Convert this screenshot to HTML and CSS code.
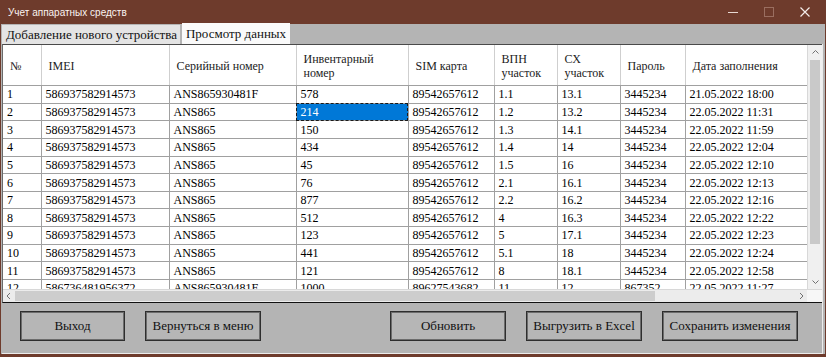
FILE: index.html
```html
<!DOCTYPE html>
<html>
  <head>
    <title>Учет аппаратных средств</title>
    <link rel="stylesheet" href="styles.css">
  </head>
  <body>
    <div class="window">
      <div class="titlebar">
        <span class="title">Учет аппаратных средств</span>
        <div class="controls">
          <svg class="ctl" width="12" height="12" viewBox="0 0 12 12"><path d="M1 6.5h10" stroke="#e8d8d2" stroke-width="1"/></svg>
          <svg class="ctl dim" width="12" height="12" viewBox="0 0 12 12"><rect x="1.5" y="1.5" width="9" height="9" fill="none" stroke="#9a6e60" stroke-width="1"/></svg>
          <svg class="ctl" width="12" height="12" viewBox="0 0 12 12"><path d="M1.5 1.5l9 9M10.5 1.5l-9 9" stroke="#f4ece9" stroke-width="1.2"/></svg>
        </div>
      </div>

      <div class="client">
        <div class="tabs">
          <div class="tab">Добавление нового устройства</div>
          <div class="tab active">Просмотр данных</div>
        </div>

        <div class="page">
          <div class="grid">
            <div class="grid-body">
              <div class="viewport">
                <table class="data">
                  <colgroup>
                    <col style="width:38px">
                    <col style="width:128px">
                    <col style="width:127px">
                    <col style="width:112px">
                    <col style="width:86px">
                    <col style="width:63px">
                    <col style="width:63px">
                    <col style="width:65px">
                    <col style="width:122px">
                  </colgroup>
                  <thead>
                    <tr>
                      <th>№</th>
                      <th>IMEI</th>
                      <th>Серийный номер</th>
                      <th>Инвентарный<br>номер</th>
                      <th>SIM карта</th>
                      <th>ВПН<br>участок</th>
                      <th>СХ<br>участок</th>
                      <th>Пароль</th>
                      <th>Дата заполнения</th>
                    </tr>
                  </thead>
                  <tbody>
                    <tr><td>1</td><td>586937582914573</td><td>ANS865930481F</td><td>578</td><td>89542657612</td><td>1.1</td><td>13.1</td><td>3445234</td><td>21.05.2022 18:00</td></tr>
                    <tr><td>2</td><td>586937582914573</td><td>ANS865</td><td class="selected">214</td><td>89542657612</td><td>1.2</td><td>13.2</td><td>3445234</td><td>22.05.2022 11:31</td></tr>
                    <tr><td>3</td><td>586937582914573</td><td>ANS865</td><td>150</td><td>89542657612</td><td>1.3</td><td>14.1</td><td>3445234</td><td>22.05.2022 11:59</td></tr>
                    <tr><td>4</td><td>586937582914573</td><td>ANS865</td><td>434</td><td>89542657612</td><td>1.4</td><td>14</td><td>3445234</td><td>22.05.2022 12:04</td></tr>
                    <tr><td>5</td><td>586937582914573</td><td>ANS865</td><td>45</td><td>89542657612</td><td>1.5</td><td>16</td><td>3445234</td><td>22.05.2022 12:10</td></tr>
                    <tr><td>6</td><td>586937582914573</td><td>ANS865</td><td>76</td><td>89542657612</td><td>2.1</td><td>16.1</td><td>3445234</td><td>22.05.2022 12:13</td></tr>
                    <tr><td>7</td><td>586937582914573</td><td>ANS865</td><td>877</td><td>89542657612</td><td>2.2</td><td>16.2</td><td>3445234</td><td>22.05.2022 12:16</td></tr>
                    <tr><td>8</td><td>586937582914573</td><td>ANS865</td><td>512</td><td>89542657612</td><td>4</td><td>16.3</td><td>3445234</td><td>22.05.2022 12:22</td></tr>
                    <tr><td>9</td><td>586937582914573</td><td>ANS865</td><td>123</td><td>89542657612</td><td>5</td><td>17.1</td><td>3445234</td><td>22.05.2022 12:23</td></tr>
                    <tr><td>10</td><td>586937582914573</td><td>ANS865</td><td>441</td><td>89542657612</td><td>5.1</td><td>18</td><td>3445234</td><td>22.05.2022 12:24</td></tr>
                    <tr><td>11</td><td>586937582914573</td><td>ANS865</td><td>121</td><td>89542657612</td><td>8</td><td>18.1</td><td>3445234</td><td>22.05.2022 12:58</td></tr>
                    <tr><td>12</td><td>586736481956372</td><td>ANS865930481F</td><td>1000</td><td>89627543682</td><td>11</td><td>12</td><td>867352</td><td>22.05.2022 11:27</td></tr>
                  </tbody>
                </table>
              </div>
              <div class="vscroll">
                <svg class="arrow" width="15" height="14" viewBox="0 0 15 14"><path d="M4.5 8.5l3-3 3 3" fill="none" stroke="#707070" stroke-width="1"/></svg>
                <div class="vthumb"></div>
                <div class="vrest"></div>
                <svg class="arrow" width="15" height="14" viewBox="0 0 15 14"><path d="M4.5 5.5l3 3 3-3" fill="none" stroke="#707070" stroke-width="1"/></svg>
              </div>
            </div>
            <div class="hscroll">
              <svg class="arrow" width="12" height="12" viewBox="0 0 12 12"><path d="M7 3l-3 3 3 3" fill="none" stroke="#707070" stroke-width="1"/></svg>
              <div class="hthumb"></div>
              <div class="hrest"></div>
              <svg class="arrow" width="12" height="12" viewBox="0 0 12 12"><path d="M5 3l3 3-3 3" fill="none" stroke="#707070" stroke-width="1"/></svg>
              <div class="corner"></div>
            </div>
          </div>

          <div class="actions">
            <button type="button" class="btn w-exit">Выход</button>
            <button type="button" class="btn w-menu">Вернуться в меню</button>
            <button type="button" class="btn w-std push">Обновить</button>
            <button type="button" class="btn w-std">Выгрузить в Excel</button>
            <button type="button" class="btn w-save">Сохранить изменения</button>
          </div>
        </div>
      </div>
    </div>
  </body>
</html>
```

FILE: styles.css
```css
html, body {
  margin: 0;
  padding: 0;
}

body {
  font-family: "Liberation Serif", "Times New Roman", serif;
  font-size: 12px;
  color: #111;
  background: #6e3b2c;
}

.window {
  width: 826px;
  height: 357px;
  background: #6e3b2c;
  display: flex;
  flex-direction: column;
  padding: 0 1px 3px 1px;
  box-sizing: border-box;
}

.titlebar {
  height: 24px;
  display: flex;
  align-items: center;
  justify-content: space-between;
  flex-shrink: 0;
}

.title {
  font-family: "Liberation Sans", Arial, sans-serif;
  font-size: 10px;
  color: #fbf4f1;
  padding-left: 7px;
}

.controls {
  display: flex;
  align-items: center;
  gap: 24px;
  padding-right: 14px;
}

.ctl {
  display: block;
}

.client {
  flex: 1;
  background: #b4b4b4;
  display: flex;
  flex-direction: column;
  padding: 0 1px 0 1px;
}

/* tabs */
.tabs {
  height: 20px;
  display: flex;
  align-items: flex-end;
  gap: 2px;
  flex-shrink: 0;
}

.tab {
  font-size: 13px;
  height: 19px;
  line-height: 19px;
  padding: 0 3px 0 4px;
  background: #e4e4e4;
  color: #111;
}

.tab.active {
  height: 21px;
  line-height: 21px;
  background: #fafafa;
  padding: 0 4px 0 4px;
}

.page {
  flex: 1;
  display: flex;
  flex-direction: column;
  border-right: 1px solid #ececec;
  border-bottom: 1px solid #ececec;
  margin-right: 1px;
}

/* grid */
.grid {
  background: #fff;
  border-top: 1px solid #4a4a4a;
  border-left: 1px solid #6a6a6a;
  border-bottom: 1px solid #111;
  display: flex;
  flex-direction: column;
  height: 257px;
  flex-shrink: 0;
}

.grid-body {
  flex: 1;
  display: flex;
  min-height: 0;
}

.viewport {
  flex: 1;
  overflow: hidden;
}

.data {
  table-layout: fixed;
  border-collapse: collapse;
  width: 804px;
}

.data th {
  font-weight: normal;
  text-align: left;
  color: #222;
  height: 38px;
  padding: 2px 0 0 7px;
  line-height: 14px;
  border-right: 1px solid #cfcfcf;
  border-bottom: 1px solid #a0a0a0;
  white-space: nowrap;
}

.data td {
  height: 16.65px;
  padding: 0 0 0 4px;
  line-height: 16px;
  border-right: 1px solid #a0a0a0;
  border-bottom: 1px solid #a0a0a0;
  white-space: nowrap;
  overflow: hidden;
  color: #000;
}

.data td.selected {
  background: #0078d7;
  color: #fff;
  outline: 1px dashed #1a1a1a;
  outline-offset: -1px;
}

.vscroll {
  width: 14px;
  background: #f0f0f0;
  display: flex;
  flex-direction: column;
  border-left: 1px solid #d8d8d8;
}

.vscroll .arrow {
  display: block;
  flex-shrink: 0;
}

.vthumb {
  height: 184px;
  margin: 1px 2px;
  background: #c9c9c9;
}

.vrest {
  flex: 1;
}

.hscroll {
  height: 12px;
  display: flex;
  align-items: center;
  background: #ececec;
  border-top: 1px solid #d8d8d8;
  flex-shrink: 0;
}

.hscroll .arrow {
  display: block;
  flex-shrink: 0;
}

.hthumb {
  width: 640px;
  height: 10px;
  background: #cdcdcd;
}

.hrest {
  flex: 1;
}

.corner {
  width: 15px;
  height: 12px;
  background: #f7f7f7;
}

/* bottom panel */
.actions {
  flex: 1;
  display: flex;
  align-items: flex-start;
  gap: 20px;
  padding: 8px 0 0 18px;
}

.btn {
  font-family: "Liberation Serif", "Times New Roman", serif;
  font-size: 13px;
  height: 30px;
  background: #b6b6b6;
  color: #111;
  border: 1px solid #2e2e2e;
  box-shadow: inset 0 0 0 1px #6c6c6c;
  padding: 0;
  cursor: pointer;
}

.w-exit { width: 105px; }
.w-menu { width: 116px; }
.w-std { width: 116px; }
.w-save { width: 136px; }

.push {
  margin-left: 109px;
}
```
